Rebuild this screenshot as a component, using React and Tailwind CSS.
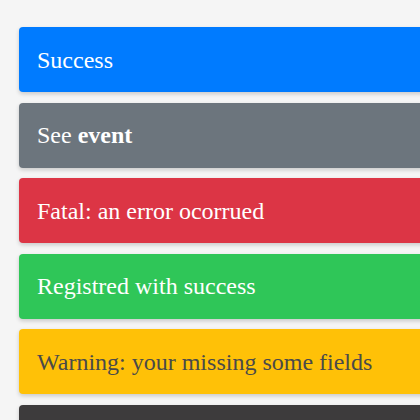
import React from 'react';

const alerts = [
  { key: 'primary', cls: 'bg-[#007bff] text-white', body: <>Success</> },
  { key: 'secondary', cls: 'bg-[#6c757d] text-white', body: <>See <b>event</b></> },
  { key: 'danger', cls: 'bg-[#dc3545] text-white', body: <>Fatal: an error ocorrued</> },
  { key: 'success', cls: 'bg-[#2fc658] text-white', body: <>Registred with success</> },
  { key: 'warning', cls: 'bg-[#ffc107] text-[#4a4a4a]', body: <>Warning: your missing some fields</> },
  { key: 'dark', cls: 'bg-[#3d3b3c] text-white', body: null },
];

const App = () => {
  return (
    <div className="h-screen w-screen overflow-hidden bg-[#f5f5f5]" style={{ fontFamily: '"Liberation Serif", serif' }}>
      <div className="flex flex-col gap-[10.6px] pt-[27px] pl-[19px]">
        {alerts.map(a => (
          <div
            key={a.key}
            className={`w-[520px] h-[65px] shrink-0 flex items-center px-[18px] rounded text-[24px] leading-[28px] shadow-[0_2px_4px_rgba(0,0,0,0.18)] ${a.cls}`}
          >
            {a.body && <span>{a.body}</span>}
          </div>
        ))}
      </div>
    </div>
  );
};

export default App;
